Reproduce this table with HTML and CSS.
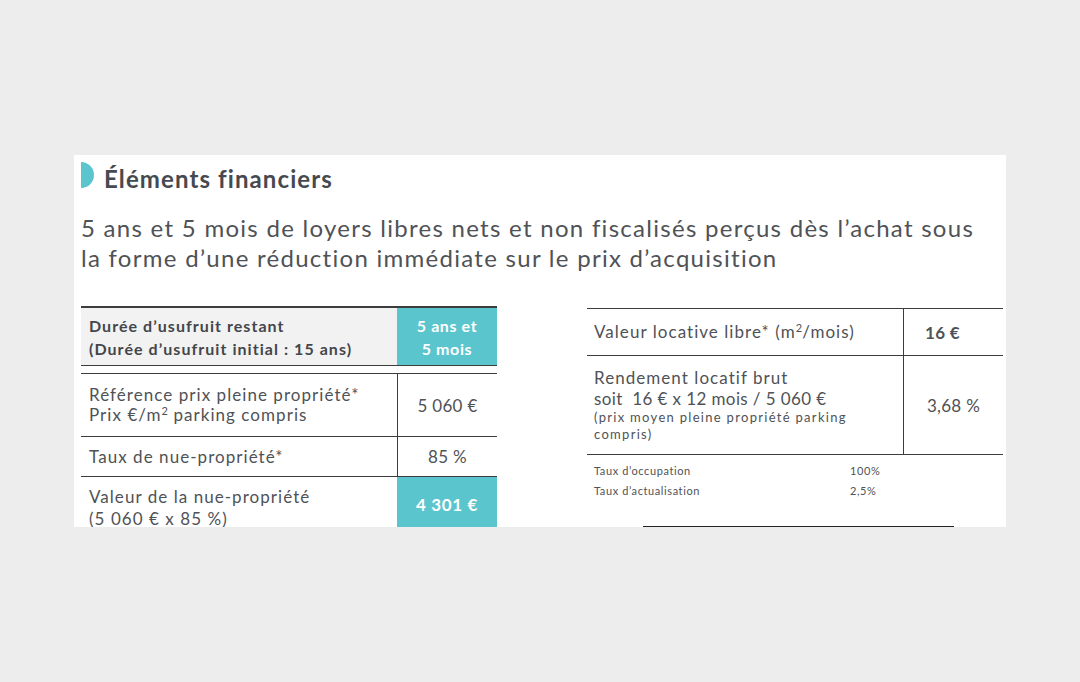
FILE: index.html
```html
<!DOCTYPE html>
<html lang="fr">
<head>
<meta charset="utf-8">
<title>Éléments financiers</title>
<link rel="stylesheet" href="styles.css">
</head>
<body>
<div class="panel">
  <div class="heading">
    <span class="half-disc"></span>
    <h1 class="title">Éléments financiers</h1>
  </div>
  <p class="lead">5 ans et 5 mois de loyers libres nets et non fiscalisés perçus dès l’achat sous<br>la forme d’une réduction immédiate sur le prix d’acquisition</p>
  <div class="columns">
    <div class="col">
      <div class="head-row">
        <div class="cell-label head-label"><div>Durée d’usufruit restant<br>(Durée d’usufruit initial : 15 ans)</div></div>
        <div class="cell-value teal"><div>5 ans et<br>5 mois</div></div>
      </div>
      <div class="table">
        <div class="row row-a">
          <div class="cell-label"><div>Référence prix pleine propriété*<br>Prix €/m<sup>2</sup> parking compris</div></div>
          <div class="cell-value sep"><div>5 060 €</div></div>
        </div>
        <div class="row row-b">
          <div class="cell-label"><div>Taux de nue-propriété*</div></div>
          <div class="cell-value sep"><div>85 %</div></div>
        </div>
        <div class="row row-c">
          <div class="cell-label"><div>Valeur de la nue-propriété<br>(5 060 € x 85 %)</div></div>
          <div class="cell-value teal big"><div>4 301 €</div></div>
        </div>
      </div>
    </div>
    <div class="col col-right">
      <div class="table rtable">
        <div class="row row-d">
          <div class="cell-label"><div>Valeur locative libre* (m<sup>2</sup>/mois)</div></div>
          <div class="cell-value sep bold"><div>16 €</div></div>
        </div>
        <div class="row row-e">
          <div class="cell-label"><div>Rendement locatif brut<br><span class="calc">soit&nbsp; 16 € x 12 mois / 5 060 €</span><span class="note">(prix moyen pleine propriété parking<br>compris)</span></div></div>
          <div class="cell-value sep"><div>3,68 %</div></div>
        </div>
      </div>
      <div class="rates">
        <div class="rate"><span class="rate-name">Taux d’occupation</span><span>100%</span></div>
        <div class="rate"><span class="rate-name">Taux d’actualisation</span><span>2,5%</span></div>
      </div>
      <div class="box"></div>
    </div>
  </div>
</div>
</body>
</html>
```

FILE: styles.css
```css
* { box-sizing: border-box; }
html, body { margin: 0; padding: 0; }
body {
  background: #ededed;
  font-family: "Lato", "DejaVu Sans", sans-serif;
  color: #4f5256;
}
.panel {
  margin: 155px 0 0 74px;
  width: 932px;
  height: 372px;
  background: #ffffff;
  overflow: hidden;
  padding: 7px 0 0 7px;
}
.heading {
  display: flex;
  align-items: center;
  gap: 10px;
  height: 26px;
}
.half-disc {
  width: 13px;
  height: 26px;
  background: #5bc5cd;
  border-radius: 0 13px 13px 0;
}
.title {
  margin: 6px 0 0 0;
  font-size: 24px;
  font-weight: 700;
  color: #464a50;
  letter-spacing: 1.1px;
}
.lead {
  margin: 25px 0 0 0;
  font-size: 24px;
  line-height: 30px;
  letter-spacing: 1.28px;
  color: #4f5256;
}
.columns {
  display: flex;
  gap: 90px;
  margin-top: 33px;
}
.col { width: 416px; }
.col-right { margin-top: 2px; }
.head-row {
  display: flex;
  height: 60px;
  border-top: 2px solid #3c3c3c;
  border-bottom: 1px solid #3c3c3c;
  background: #f2f2f2;
}
.table { margin-top: 7px; }
.rtable { margin-top: 0; }
.row {
  display: flex;
  border-top: 1px solid #3c3c3c;
}
.cell-label {
  width: 316px;
  padding-left: 8px;
  display: flex;
  align-items: center;
  font-size: 17px;
  line-height: 20px;
  letter-spacing: 1.05px;
}
.head-label {
  font-weight: 700;
  font-size: 16px;
  line-height: 23px;
  letter-spacing: 1.05px;
  color: #43464b;
}
.cell-value {
  width: 100px;
  display: flex;
  align-items: center;
  justify-content: center;
  text-align: center;
  font-size: 17px;
  line-height: 21px;
  letter-spacing: 0.3px;
}
.sep { border-left: 1px solid #3c3c3c; }
.teal {
  background: #5bc5cd;
  color: #ffffff;
  font-weight: 700;
  font-size: 16px;
  line-height: 23px;
  letter-spacing: 0.6px;
}
.big { font-size: 17px; }
.bold { font-weight: 700; justify-content: flex-start; padding-left: 21px; }
sup { font-size: 11px; line-height: 0; vertical-align: 6px; letter-spacing: 0; }
.row-a { height: 63px; }
.row-b { height: 40px; }
.row-c { height: 56px; }
.row-c .cell-label { align-items: flex-start; padding-top: 9px; line-height: 22px; }
.row-d { height: 47px; }
.row-e { height: 100px; border-bottom: 1px solid #3c3c3c; }
.row-d .cell-label, .row-e .cell-label { padding-left: 7px; }
.row-e .cell-label { align-items: flex-start; padding-top: 11px; line-height: 21px; }
.calc { letter-spacing: 0.4px; }
.note { display: block; font-size: 13px; line-height: 17px; letter-spacing: 1.3px; }
.rates {
  padding: 6px 0 0 7px;
  font-size: 11px;
  line-height: 20px;
  letter-spacing: 0.6px;
}
.rate { display: flex; }
.rate-name { width: 256px; }
.box {
  margin: 25px 0 0 56px;
  width: 311px;
  height: 20px;
  border: 1px solid #222;
}
```
